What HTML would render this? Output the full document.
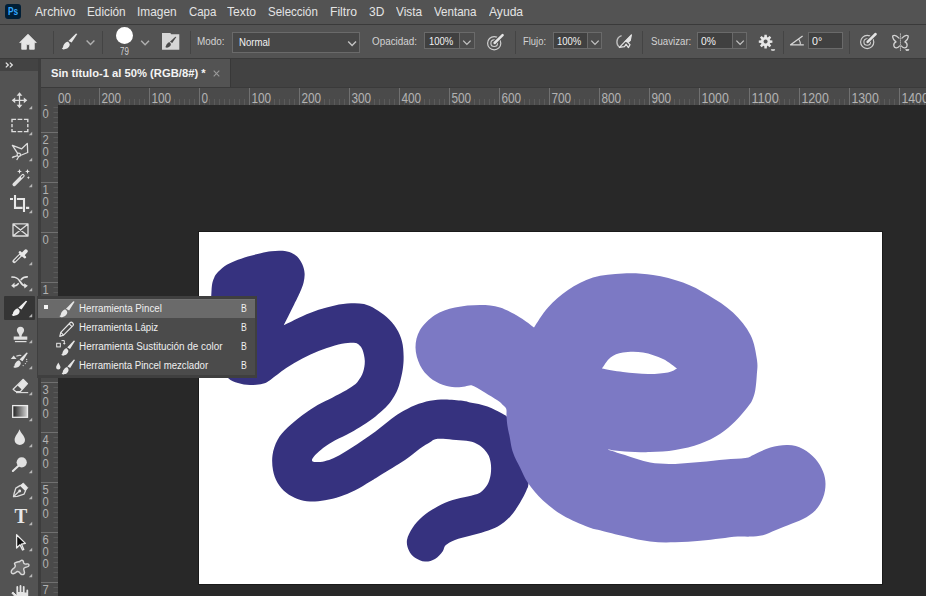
<!DOCTYPE html><html lang="es"><head><meta charset="utf-8"><title>Sin título-1 al 50% (RGB/8#) *</title><style>

html,body{margin:0;padding:0;background:#282828;}
body{width:926px;height:596px;overflow:hidden;position:relative;font-family:"Liberation Sans",sans-serif;}
.b{position:absolute;display:block;}
.t{position:absolute;display:block;white-space:pre;line-height:1;transform-origin:0 50%;}
svg text{font-family:"Liberation Sans",sans-serif;}
.art{display:block;}

</style></head><body>
<main class="document"><div class="b work" style="left:58px;top:105px;width:868px;height:491px;background:#282828;"></div><div class="b canvas" style="left:199px;top:232px;width:683px;height:352px;background:#fff;box-shadow:0 0 0 1px #1a1a1a;overflow:hidden"><svg class="art" width="683" height="352" viewBox="0 0 683 352"><path d="M12.6 56.9C12.7 56.0 12.8 53.5 13.2 51.7C13.6 49.9 14.3 47.6 15.1 45.9C15.8 44.2 16.0 43.3 17.7 41.4C19.4 39.4 22.5 36.3 25.5 34.2C28.5 32.1 32.0 30.6 35.9 29.0C39.8 27.4 44.5 25.8 48.8 24.5C53.1 23.2 57.9 22.2 61.8 21.3C65.7 20.4 69.0 19.7 72.2 19.3C75.4 18.9 78.2 18.6 81.2 18.7C84.2 18.8 87.5 19.0 90.3 20.0C93.1 21.0 95.9 22.4 98.1 24.5C100.3 26.6 102.1 29.5 103.3 32.3C104.6 35.1 105.4 38.4 105.6 41.4C105.8 44.4 105.3 47.3 104.6 50.4C103.9 53.5 102.1 57.5 101.2 59.8C100.3 62.1 100.8 60.9 99.3 64.0C97.8 67.1 94.5 73.7 92.1 78.6C89.7 83.5 86.0 90.8 84.8 93.2C87.9 91.7 97.6 86.8 103.4 84.2C109.2 81.6 114.2 79.6 119.6 77.8C125.0 76.0 130.4 74.5 135.8 73.4C141.2 72.3 147.1 71.5 152.0 71.3C156.9 71.1 160.9 71.2 165.0 72.1C169.1 73.1 172.5 74.8 176.3 77.0C180.1 79.2 184.1 81.9 187.6 85.1C191.1 88.3 194.8 92.3 197.4 96.4C200.0 100.4 201.8 104.8 203.0 109.4C204.2 114.0 204.5 119.3 204.6 123.9C204.7 128.5 204.5 132.3 203.8 136.9C203.1 141.5 201.7 147.7 200.6 151.5C199.6 155.3 198.8 157.2 197.5 160.0C196.2 162.8 194.6 165.4 192.8 168.0C191.0 170.6 189.3 172.8 186.6 175.5C183.9 178.2 180.3 181.4 176.5 184.4C172.7 187.3 168.1 190.5 163.9 193.2C159.7 195.9 155.9 198.2 151.3 200.7C146.7 203.2 140.4 206.0 136.2 208.3C132.0 210.6 129.1 212.5 126.2 214.6C123.3 216.7 120.6 219.0 118.6 220.8C116.6 222.6 115.1 224.2 114.2 225.5C113.3 226.8 112.8 227.7 113.0 228.4C113.2 229.1 113.7 229.7 115.5 229.9C117.3 230.1 120.8 230.2 123.6 229.7C126.4 229.2 129.3 228.4 132.5 227.1C135.7 225.8 139.2 224.0 142.5 222.1C145.8 220.2 149.0 218.1 152.6 215.8C156.2 213.5 159.9 211.0 163.9 208.3C167.9 205.6 172.3 202.7 176.5 199.5C180.7 196.3 184.9 192.5 189.1 189.4C193.3 186.2 197.2 183.3 201.7 180.6C206.2 177.9 211.1 175.3 216.0 173.3C220.9 171.3 226.0 169.8 231.0 168.8C236.0 167.8 240.6 167.5 246.0 167.5C251.4 167.5 259.4 168.3 263.6 168.8C267.8 169.3 268.3 169.9 271.0 170.4C273.7 170.9 276.8 171.2 279.7 171.9C282.6 172.6 285.6 173.4 288.5 174.5C291.4 175.6 294.1 177.0 297.2 178.5C300.3 180.0 305.4 182.8 307.0 183.7C309.7 186.4 319.0 193.4 323.0 200.0C327.0 206.6 329.9 214.6 331.0 223.0C332.1 231.4 330.2 244.8 329.6 250.6C329.0 256.4 329.0 254.7 327.6 258.0C326.2 261.4 323.7 266.3 321.0 270.7C318.3 275.1 315.0 280.5 311.3 284.5C307.6 288.5 303.0 292.0 298.8 294.5C294.6 297.0 290.6 297.9 286.0 299.5C281.4 301.1 276.0 302.4 271.0 303.8C266.0 305.2 260.1 306.4 256.0 308.0C251.9 309.6 248.7 311.4 246.6 313.3C244.5 315.2 245.4 317.2 243.6 319.5C241.8 321.8 238.9 325.3 236.0 327.0C233.1 328.7 229.3 329.8 226.0 329.6C222.7 329.4 218.7 327.7 216.0 325.8C213.3 323.9 211.1 321.3 209.8 318.3C208.5 315.3 207.4 311.8 208.0 308.0C208.6 304.2 211.0 299.6 213.6 295.7C216.2 291.8 219.4 288.1 223.6 284.5C227.8 280.9 233.6 277.1 238.6 274.4C243.6 271.6 248.7 269.7 253.7 268.0C258.7 266.3 264.1 265.6 268.7 264.4C273.2 263.2 277.8 262.6 281.0 260.7C284.2 258.8 286.5 255.6 288.2 253.0C289.9 250.4 290.5 247.7 291.2 245.1C291.9 242.5 292.0 239.8 292.1 237.3C292.2 234.8 292.0 232.6 291.6 230.3C291.2 228.0 290.6 225.5 289.5 223.3C288.4 221.1 286.9 219.0 285.1 217.2C283.4 215.4 281.5 213.7 279.0 212.4C276.5 211.1 273.9 210.0 270.3 209.3C266.7 208.6 261.6 208.4 257.2 208.0C252.8 207.6 247.6 206.8 244.1 206.7C240.6 206.6 238.4 206.6 236.2 207.2C234.0 207.8 233.5 208.6 231.0 210.2C228.5 211.8 225.2 213.5 221.0 216.5C216.8 219.5 212.6 223.6 206.0 228.0C199.4 232.4 187.1 239.6 181.3 243.2C175.5 246.8 175.4 247.0 171.2 249.5C167.0 252.0 161.2 255.8 156.2 258.3C151.2 260.8 146.2 262.8 141.2 264.5C136.2 266.2 131.0 267.5 126.0 268.3C121.0 269.1 115.6 269.7 111.0 269.5C106.4 269.3 102.6 268.4 98.6 267.0C94.7 265.6 90.7 263.5 87.3 260.8C84.0 258.1 80.7 254.5 78.5 250.7C76.3 246.9 74.8 242.8 74.0 238.2C73.2 233.6 72.8 228.2 73.5 223.2C74.2 218.2 76.0 212.6 78.5 208.0C81.0 203.4 84.4 199.8 88.6 195.6C92.8 191.4 98.6 186.8 103.6 183.0C108.6 179.2 113.6 175.9 118.6 173.0C123.6 170.1 129.5 167.7 133.7 165.5C137.9 163.3 141.1 161.6 143.9 160.1C146.7 158.6 148.0 158.0 150.4 156.3C152.8 154.6 156.2 152.6 158.5 149.9C160.8 147.2 162.9 143.6 164.1 140.1C165.3 136.6 165.9 132.5 165.8 128.8C165.7 125.1 164.5 120.6 163.6 118.0C162.7 115.4 161.8 114.6 160.6 113.4C159.4 112.2 158.5 111.4 156.5 111.0C154.5 110.6 152.2 110.6 148.8 111.0C145.4 111.4 140.7 112.0 135.8 113.4C130.9 114.7 125.0 116.9 119.6 119.1C114.2 121.3 108.8 123.6 103.4 126.4C98.0 129.2 92.6 132.5 87.2 136.1C81.8 139.7 74.9 145.6 71.0 148.2C67.1 150.8 66.9 151.0 63.6 151.8C60.3 152.6 55.1 153.1 51.0 153.0C46.9 152.9 42.7 152.2 39.0 151.0C35.3 149.8 32.3 149.0 29.0 146.0C25.7 143.0 21.5 139.3 19.0 133.0C16.5 126.7 15.2 117.2 14.0 108.0C12.8 98.8 12.2 86.5 12.0 78.0C11.8 69.5 12.5 60.4 12.6 56.9Z" fill="#36327f"/><path d="M335.0 95.5C337.3 92.2 343.3 81.8 349.0 75.5C354.7 69.2 361.5 63.0 369.0 58.0C376.5 53.0 384.8 48.2 394.0 45.5C403.2 42.8 414.0 41.9 424.0 41.5C434.0 41.1 444.0 41.5 454.0 43.0C464.0 44.5 474.8 47.2 484.0 50.5C493.2 53.8 500.7 58.0 509.0 63.0C517.3 68.0 526.9 73.8 534.0 80.5C541.1 87.2 547.5 95.1 551.5 103.0C555.5 110.9 557.0 121.3 558.0 128.0C559.0 134.7 558.1 138.0 557.8 143.0C557.5 148.0 557.0 153.8 556.3 158.0C555.5 162.2 554.6 165.1 553.3 168.0C552.0 170.9 551.1 171.9 548.3 175.5C545.5 179.1 540.8 184.9 536.3 189.3C531.8 193.7 527.1 198.1 521.3 201.8C515.4 205.6 508.7 209.1 501.2 211.8C493.7 214.5 484.6 216.7 476.2 218.1C467.8 219.5 459.4 219.9 451.0 220.1C442.6 220.3 433.1 219.8 426.0 219.4C418.9 218.9 411.4 217.7 408.5 217.4C411.4 218.3 418.9 220.9 426.0 223.1C433.1 225.3 442.7 229.1 451.1 230.6C459.5 232.1 467.9 232.0 476.2 231.9C484.6 231.8 492.9 230.8 501.2 230.1C509.6 229.4 518.8 228.3 526.3 227.6C533.8 226.9 541.3 227.1 546.3 226.1C551.3 225.2 552.1 223.6 556.3 221.9C560.5 220.1 566.0 217.1 571.4 215.6C576.8 214.1 583.5 212.9 588.9 213.1C594.3 213.3 599.4 214.6 604.0 216.9C608.6 219.2 613.2 223.1 616.5 226.9C619.8 230.6 622.3 235.2 624.0 239.4C625.7 243.6 626.5 247.5 626.5 251.9C626.5 256.3 625.7 261.3 624.0 265.7C622.3 270.1 619.8 274.6 616.5 278.2C613.2 281.8 608.6 284.5 604.0 287.0C599.4 289.5 593.5 291.4 588.9 293.3C584.3 295.2 580.6 296.6 576.4 298.3C572.2 300.0 568.1 302.2 563.9 303.3C559.7 304.3 555.5 304.4 551.3 304.6C547.1 304.8 543.8 304.3 538.8 304.6C533.8 304.9 527.6 305.9 521.3 306.6C515.0 307.3 508.7 308.2 501.2 308.8C493.7 309.4 484.6 310.2 476.2 310.3C467.9 310.4 459.5 310.6 451.1 309.6C442.8 308.7 434.5 306.5 426.1 304.6C417.8 302.7 407.2 299.9 401.0 298.3C394.8 296.7 395.2 297.5 389.0 295.0C382.8 292.5 371.5 287.9 364.0 283.5C356.5 279.1 349.8 273.9 344.0 268.5C338.2 263.1 332.8 256.5 329.0 251.0C325.2 245.5 323.5 240.7 321.0 235.6C318.5 230.5 315.8 226.1 314.0 220.6C312.2 215.2 311.2 207.3 310.3 202.9C309.4 198.5 309.0 197.4 308.5 194.2C308.0 191.0 307.7 186.6 307.5 183.7C307.3 180.8 307.9 178.6 307.2 176.7C306.5 174.8 304.8 173.8 303.3 172.4C301.8 170.9 300.9 169.9 298.0 168.0C295.1 166.1 290.2 163.1 286.2 160.7C282.1 158.3 277.0 154.7 273.7 153.7C270.4 152.7 269.0 154.2 266.1 154.5C263.2 154.8 259.9 155.5 256.1 155.2C252.4 154.9 247.8 154.3 243.6 152.7C239.4 151.1 234.8 148.9 231.0 145.7C227.2 142.4 223.4 138.2 221.0 133.2C218.6 128.2 216.5 121.5 216.5 115.6C216.5 109.7 217.8 103.4 221.0 98.0C224.2 92.6 230.2 86.8 236.0 83.0C241.8 79.2 248.5 77.2 256.0 75.5C263.5 73.8 273.5 73.0 281.0 73.0C288.5 73.0 294.3 73.4 301.0 75.5C307.7 77.6 315.3 82.2 321.0 85.5C326.7 88.8 332.7 93.8 335.0 95.5ZM403.0 136.5C404.4 134.7 408.0 128.2 411.5 125.5C415.0 122.8 418.6 121.3 424.0 120.5C429.4 119.7 437.3 119.4 444.0 120.5C450.7 121.6 458.3 124.3 464.0 127.0C469.7 129.7 475.7 134.9 478.0 136.5C476.5 137.2 473.8 139.6 469.0 140.5C464.2 141.4 456.5 142.1 449.0 142.0C441.5 141.9 431.7 140.9 424.0 140.0C416.3 139.1 406.5 137.1 403.0 136.5Z" fill="#7c79c4" fill-rule="evenodd"/></svg></div></main>
<div class="rulers"><svg class="b ruler" style="left:41px;top:88px;background:#4a4a4a" width="885" height="17" viewBox="0 0 885 17" font-size="14.5" fill="#b2b2b2"><path d="M58.5 0V17" stroke="#707070"/><path d="M108.5 0V17" stroke="#707070"/><path d="M158.5 0V17" stroke="#707070"/><path d="M208.5 0V17" stroke="#707070"/><path d="M258.5 0V17" stroke="#707070"/><path d="M308.5 0V17" stroke="#707070"/><path d="M358.5 0V17" stroke="#707070"/><path d="M408.5 0V17" stroke="#707070"/><path d="M458.5 0V17" stroke="#707070"/><path d="M508.5 0V17" stroke="#707070"/><path d="M558.5 0V17" stroke="#707070"/><path d="M608.5 0V17" stroke="#707070"/><path d="M658.5 0V17" stroke="#707070"/><path d="M708.5 0V17" stroke="#707070"/><path d="M758.5 0V17" stroke="#707070"/><path d="M808.5 0V17" stroke="#707070"/><path d="M858.5 0V17" stroke="#707070"/><path d="M18.5 11V17M23.5 11V17M28.5 11V17M33.5 11V17M38.5 11V17M43.5 11V17M48.5 11V17M53.5 11V17M63.5 11V17M68.5 11V17M73.5 11V17M78.5 11V17M83.5 11V17M88.5 11V17M93.5 11V17M98.5 11V17M103.5 11V17M113.5 11V17M118.5 11V17M123.5 11V17M128.5 11V17M133.5 11V17M138.5 11V17M143.5 11V17M148.5 11V17M153.5 11V17M163.5 11V17M168.5 11V17M173.5 11V17M178.5 11V17M183.5 11V17M188.5 11V17M193.5 11V17M198.5 11V17M203.5 11V17M213.5 11V17M218.5 11V17M223.5 11V17M228.5 11V17M233.5 11V17M238.5 11V17M243.5 11V17M248.5 11V17M253.5 11V17M263.5 11V17M268.5 11V17M273.5 11V17M278.5 11V17M283.5 11V17M288.5 11V17M293.5 11V17M298.5 11V17M303.5 11V17M313.5 11V17M318.5 11V17M323.5 11V17M328.5 11V17M333.5 11V17M338.5 11V17M343.5 11V17M348.5 11V17M353.5 11V17M363.5 11V17M368.5 11V17M373.5 11V17M378.5 11V17M383.5 11V17M388.5 11V17M393.5 11V17M398.5 11V17M403.5 11V17M413.5 11V17M418.5 11V17M423.5 11V17M428.5 11V17M433.5 11V17M438.5 11V17M443.5 11V17M448.5 11V17M453.5 11V17M463.5 11V17M468.5 11V17M473.5 11V17M478.5 11V17M483.5 11V17M488.5 11V17M493.5 11V17M498.5 11V17M503.5 11V17M513.5 11V17M518.5 11V17M523.5 11V17M528.5 11V17M533.5 11V17M538.5 11V17M543.5 11V17M548.5 11V17M553.5 11V17M563.5 11V17M568.5 11V17M573.5 11V17M578.5 11V17M583.5 11V17M588.5 11V17M593.5 11V17M598.5 11V17M603.5 11V17M613.5 11V17M618.5 11V17M623.5 11V17M628.5 11V17M633.5 11V17M638.5 11V17M643.5 11V17M648.5 11V17M653.5 11V17M663.5 11V17M668.5 11V17M673.5 11V17M678.5 11V17M683.5 11V17M688.5 11V17M693.5 11V17M698.5 11V17M703.5 11V17M713.5 11V17M718.5 11V17M723.5 11V17M728.5 11V17M733.5 11V17M738.5 11V17M743.5 11V17M748.5 11V17M753.5 11V17M763.5 11V17M768.5 11V17M773.5 11V17M778.5 11V17M783.5 11V17M788.5 11V17M793.5 11V17M798.5 11V17M803.5 11V17M813.5 11V17M818.5 11V17M823.5 11V17M828.5 11V17M833.5 11V17M838.5 11V17M843.5 11V17M848.5 11V17M853.5 11V17M863.5 11V17M868.5 11V17M873.5 11V17M878.5 11V17M883.5 11V17" stroke="#5a5a5a"/><text x="10.4" y="15" textLength="19.65" lengthAdjust="spacingAndGlyphs">300</text><text x="60.4" y="15" textLength="19.65" lengthAdjust="spacingAndGlyphs">200</text><text x="110.4" y="15" textLength="19.65" lengthAdjust="spacingAndGlyphs">100</text><text x="160.4" y="15" textLength="6.55" lengthAdjust="spacingAndGlyphs">0</text><text x="210.4" y="15" textLength="19.65" lengthAdjust="spacingAndGlyphs">100</text><text x="260.4" y="15" textLength="19.65" lengthAdjust="spacingAndGlyphs">200</text><text x="310.4" y="15" textLength="19.65" lengthAdjust="spacingAndGlyphs">300</text><text x="360.4" y="15" textLength="19.65" lengthAdjust="spacingAndGlyphs">400</text><text x="410.4" y="15" textLength="19.65" lengthAdjust="spacingAndGlyphs">500</text><text x="460.4" y="15" textLength="19.65" lengthAdjust="spacingAndGlyphs">600</text><text x="510.4" y="15" textLength="19.65" lengthAdjust="spacingAndGlyphs">700</text><text x="560.4" y="15" textLength="19.65" lengthAdjust="spacingAndGlyphs">800</text><text x="610.4" y="15" textLength="19.65" lengthAdjust="spacingAndGlyphs">900</text><text x="660.4" y="15" textLength="27.4" lengthAdjust="spacingAndGlyphs">1000</text><text x="710.4" y="15" textLength="27.4" lengthAdjust="spacingAndGlyphs">1100</text><text x="760.4" y="15" textLength="27.4" lengthAdjust="spacingAndGlyphs">1200</text><text x="810.4" y="15" textLength="27.4" lengthAdjust="spacingAndGlyphs">1300</text><text x="860.4" y="15" textLength="27.4" lengthAdjust="spacingAndGlyphs">1400</text></svg><svg class="b ruler" style="left:41px;top:88px;background:#4a4a4a" width="17" height="508" viewBox="0 0 17 508" font-size="12" fill="#b2b2b2"><path d="M0 44.5H17" stroke="#707070"/><path d="M0 94.5H17" stroke="#707070"/><path d="M0 144.5H17" stroke="#707070"/><path d="M0 194.5H17" stroke="#707070"/><path d="M0 244.5H17" stroke="#707070"/><path d="M0 294.5H17" stroke="#707070"/><path d="M0 344.5H17" stroke="#707070"/><path d="M0 394.5H17" stroke="#707070"/><path d="M0 444.5H17" stroke="#707070"/><path d="M0 494.5H17" stroke="#707070"/><path d="M12.5 19.5H17M12.5 24.5H17M12.5 29.5H17M12.5 34.5H17M12.5 39.5H17M12.5 49.5H17M12.5 54.5H17M12.5 59.5H17M12.5 64.5H17M12.5 69.5H17M12.5 74.5H17M12.5 79.5H17M12.5 84.5H17M12.5 89.5H17M12.5 99.5H17M12.5 104.5H17M12.5 109.5H17M12.5 114.5H17M12.5 119.5H17M12.5 124.5H17M12.5 129.5H17M12.5 134.5H17M12.5 139.5H17M12.5 149.5H17M12.5 154.5H17M12.5 159.5H17M12.5 164.5H17M12.5 169.5H17M12.5 174.5H17M12.5 179.5H17M12.5 184.5H17M12.5 189.5H17M12.5 199.5H17M12.5 204.5H17M12.5 209.5H17M12.5 214.5H17M12.5 219.5H17M12.5 224.5H17M12.5 229.5H17M12.5 234.5H17M12.5 239.5H17M12.5 249.5H17M12.5 254.5H17M12.5 259.5H17M12.5 264.5H17M12.5 269.5H17M12.5 274.5H17M12.5 279.5H17M12.5 284.5H17M12.5 289.5H17M12.5 299.5H17M12.5 304.5H17M12.5 309.5H17M12.5 314.5H17M12.5 319.5H17M12.5 324.5H17M12.5 329.5H17M12.5 334.5H17M12.5 339.5H17M12.5 349.5H17M12.5 354.5H17M12.5 359.5H17M12.5 364.5H17M12.5 369.5H17M12.5 374.5H17M12.5 379.5H17M12.5 384.5H17M12.5 389.5H17M12.5 399.5H17M12.5 404.5H17M12.5 409.5H17M12.5 414.5H17M12.5 419.5H17M12.5 424.5H17M12.5 429.5H17M12.5 434.5H17M12.5 439.5H17M12.5 449.5H17M12.5 454.5H17M12.5 459.5H17M12.5 464.5H17M12.5 469.5H17M12.5 474.5H17M12.5 479.5H17M12.5 484.5H17M12.5 489.5H17M12.5 499.5H17M12.5 504.5H17M12.5 509.5H17" stroke="#5a5a5a"/><text x="1.6" y="5.6" textLength="6.2" lengthAdjust="spacingAndGlyphs">3</text><text x="1.6" y="17.6" textLength="6.2" lengthAdjust="spacingAndGlyphs">0</text><text x="1.6" y="29.6" textLength="6.2" lengthAdjust="spacingAndGlyphs">0</text><text x="1.6" y="55.6" textLength="6.2" lengthAdjust="spacingAndGlyphs">2</text><text x="1.6" y="67.6" textLength="6.2" lengthAdjust="spacingAndGlyphs">0</text><text x="1.6" y="79.6" textLength="6.2" lengthAdjust="spacingAndGlyphs">0</text><text x="1.6" y="105.6" textLength="6.2" lengthAdjust="spacingAndGlyphs">1</text><text x="1.6" y="117.6" textLength="6.2" lengthAdjust="spacingAndGlyphs">0</text><text x="1.6" y="129.6" textLength="6.2" lengthAdjust="spacingAndGlyphs">0</text><text x="1.6" y="155.6" textLength="6.2" lengthAdjust="spacingAndGlyphs">0</text><text x="1.6" y="205.6" textLength="6.2" lengthAdjust="spacingAndGlyphs">1</text><text x="1.6" y="217.6" textLength="6.2" lengthAdjust="spacingAndGlyphs">0</text><text x="1.6" y="229.6" textLength="6.2" lengthAdjust="spacingAndGlyphs">0</text><text x="1.6" y="255.6" textLength="6.2" lengthAdjust="spacingAndGlyphs">2</text><text x="1.6" y="267.6" textLength="6.2" lengthAdjust="spacingAndGlyphs">0</text><text x="1.6" y="279.6" textLength="6.2" lengthAdjust="spacingAndGlyphs">0</text><text x="1.6" y="305.6" textLength="6.2" lengthAdjust="spacingAndGlyphs">3</text><text x="1.6" y="317.6" textLength="6.2" lengthAdjust="spacingAndGlyphs">0</text><text x="1.6" y="329.6" textLength="6.2" lengthAdjust="spacingAndGlyphs">0</text><text x="1.6" y="355.6" textLength="6.2" lengthAdjust="spacingAndGlyphs">4</text><text x="1.6" y="367.6" textLength="6.2" lengthAdjust="spacingAndGlyphs">0</text><text x="1.6" y="379.6" textLength="6.2" lengthAdjust="spacingAndGlyphs">0</text><text x="1.6" y="405.6" textLength="6.2" lengthAdjust="spacingAndGlyphs">5</text><text x="1.6" y="417.6" textLength="6.2" lengthAdjust="spacingAndGlyphs">0</text><text x="1.6" y="429.6" textLength="6.2" lengthAdjust="spacingAndGlyphs">0</text><text x="1.6" y="455.6" textLength="6.2" lengthAdjust="spacingAndGlyphs">6</text><text x="1.6" y="467.6" textLength="6.2" lengthAdjust="spacingAndGlyphs">0</text><text x="1.6" y="479.6" textLength="6.2" lengthAdjust="spacingAndGlyphs">0</text><text x="1.6" y="505.6" textLength="6.2" lengthAdjust="spacingAndGlyphs">7</text><text x="1.6" y="517.6" textLength="6.2" lengthAdjust="spacingAndGlyphs">0</text><text x="1.6" y="529.6" textLength="6.2" lengthAdjust="spacingAndGlyphs">0</text></svg><div class="b corner" style="left:41px;top:88px;width:17px;height:17px;background:#4a4a4a;"></div></div>
<nav class="tabs"><div class="b tabbar" style="left:41px;top:59px;width:885px;height:29px;background:#424242;"></div><div class="b" style="left:41px;top:87px;width:885px;height:1px;background:#3a3a3a;"></div><div class="b tab" style="left:41px;top:59px;width:189px;height:28px;background:#535353;border-right:1px solid #383838"></div><span class="t" style="left:51.00px;top:68.09px;font-size:11px;color:#f4f4f4;font-weight:700;transform:scaleX(1.0199);">Sin título-1 al 50% (RGB/8#) *</span><svg class="b" style="left:212.5px;top:69.5px" width="7" height="7" viewBox="0 0 7 7"><path d="M0.7 0.7L6.3 6.3M6.3 0.7L0.7 6.3" stroke="#9a9a9a" stroke-width="1.1" fill="none"/></svg></nav>
<aside class="tools"><div class="b toolbar" style="left:0px;top:59px;width:38px;height:537px;background:#535353;"></div><div class="b tb-head" style="left:0px;top:59px;width:38px;height:12px;background:#434343;"></div><svg class="b" style="left:5px;top:62px" width="9" height="6" viewBox="0 0 9 6"><path d="M0.8 0.6L3.3 3L0.8 5.4M4.800 0.6L7.300 3L4.800 5.4" fill="none" stroke="#e4e4e4" stroke-width="1.3"/></svg><div class="b" style="left:38px;top:59px;width:3px;height:537px;background:#3d3d3d;"></div><div class="b active" style="left:4.3px;top:296.3px;width:31px;height:23.4px;background:#353535;border-radius:1px"></div><svg class="b" style="left:0;top:0" width="40" height="596" viewBox="0 0 40 596"><path d="M32.2 105.8 V109.2 H28.8Z" fill="#b8b8b8" /><path d="M32.2 131.8 V135.2 H28.8Z" fill="#b8b8b8" /><path d="M32.2 157.8 V161.2 H28.8Z" fill="#b8b8b8" /><path d="M32.2 183.8 V187.2 H28.8Z" fill="#b8b8b8" /><path d="M32.2 209.8 V213.2 H28.8Z" fill="#b8b8b8" /><path d="M32.2 261.8 V265.2 H28.8Z" fill="#b8b8b8" /><path d="M32.2 287.8 V291.2 H28.8Z" fill="#b8b8b8" /><path d="M32.2 313.8 V317.2 H28.8Z" fill="#b8b8b8" /><path d="M32.2 339.8 V343.2 H28.8Z" fill="#b8b8b8" /><path d="M32.2 365.8 V369.2 H28.8Z" fill="#b8b8b8" /><path d="M32.2 391.8 V395.2 H28.8Z" fill="#b8b8b8" /><path d="M32.2 417.8 V421.2 H28.8Z" fill="#b8b8b8" /><path d="M32.2 443.8 V447.2 H28.8Z" fill="#b8b8b8" /><path d="M32.2 469.8 V473.2 H28.8Z" fill="#b8b8b8" /><path d="M32.2 495.8 V499.2 H28.8Z" fill="#b8b8b8" /><path d="M32.2 521.8 V525.2 H28.8Z" fill="#b8b8b8" /><path d="M32.2 547.8 V551.2 H28.8Z" fill="#b8b8b8" /><path d="M32.2 573.8 V577.2 H28.8Z" fill="#b8b8b8" /><path d="M19.5 94.5V106 M14 100.3H25" fill="none" stroke="#dedede" stroke-width="1.3" /><path d="M19.5 92.2L22.4 95.7H16.6Z M19.5 108.3L22.4 104.8H16.6Z M11.7 100.3L15.2 97.4V103.2Z M27.3 100.3L23.8 97.4V103.2Z" fill="#dedede" /><path d="M12 122.2V119.4H16.1 M17.6 119.4H22.3 M23.9 119.4H27.8V122.2 M27.8 124V127.3 M27.8 129V131.6H23.9 M22.3 131.6H17.6 M16.1 131.6H12V129 M12 127.3V124" fill="none" stroke="#dedede" stroke-width="1.4" /><path d="M17.6 153.3 L12.4 145.3 L21.7 148.8 L27.3 143.4 L27.7 152.5 L20.3 155.5" fill="none" stroke="#dedede" stroke-width="1.3" stroke-linejoin="round" stroke-linecap="round"/><circle cx="18.8" cy="154.8" r="1.7" fill="none" stroke="#dedede" stroke-width="1.2"/><path d="M17.6 155.6 L12.2 157.9 L12.6 156.8Z" fill="#dedede" stroke="#dedede" stroke-width="0.8" stroke-linejoin="round"/><path d="M18.8 156.5 L16.9 159.6" fill="none" stroke="#dedede" stroke-width="1.2" stroke-linecap="round"/><path d="M14.2 184.4 L22.9 175.7" fill="none" stroke="#e2e2e2" stroke-width="3.5" stroke-linecap="round"/><path d="M21.6 177 L22.9 175.7" fill="none" stroke="#555" stroke-width="1.3" stroke-linecap="round"/><path d="M19.50 168.90 L20.20 170.70 L22.00 171.40 L20.20 172.10 L19.50 173.90 L18.80 172.10 L17.00 171.40 L18.80 170.70Z" fill="#e8e8e8" /><path d="M27.50 168.90 L28.20 170.70 L30.00 171.40 L28.20 172.10 L27.50 173.90 L26.80 172.10 L25.00 171.40 L26.80 170.70Z" fill="#e8e8e8" /><path d="M28.40 176.10 L28.85 177.25 L30.00 177.70 L28.85 178.15 L28.40 179.30 L27.95 178.15 L26.80 177.70 L27.95 177.25Z" fill="#e0e0e0" /><path d="M15 195V207.9H22.6 M16.9 199H24V212 M10 199H13 M26 207.9H29.2" fill="none" stroke="#e8e8e8" stroke-width="2.1" /><path d="M13 223.9H28V236H13Z M13 223.9L28 236 M28 223.9L13 236" fill="none" stroke="#dedede" stroke-width="1.3" stroke-linejoin="round"/><path d="M14.3 261.3 L20.9 254.7" fill="none" stroke="#e4e4e4" stroke-width="3.7" stroke-linecap="round"/><path d="M14.9 260.7 L19.8 255.8" fill="none" stroke="#4a4a4a" stroke-width="1.3" stroke-linecap="round"/><path d="M20 252.4 L24.8 257.2" fill="none" stroke="#e8e8e8" stroke-width="2.6" stroke-linecap="round"/><path d="M22.6 254.6 L25.8 251.2" fill="none" stroke="#e8e8e8" stroke-width="3.8" stroke-linecap="round"/><path d="M12 277 C17.5 277 18.8 279.5 20.2 281.8 C21.6 284.1 22.8 285.6 25 285.9" fill="none" stroke="#e4e4e4" stroke-width="1.7" stroke-linecap="round"/><path d="M24 283.2 L27.9 285.8 L24.4 288.6Z" fill="#e4e4e4" /><path d="M27.2 276.8 C24 276.8 22.3 278 21.2 279.5" fill="none" stroke="#e4e4e4" stroke-width="1.7" stroke-linecap="round"/><path d="M18.2 283.7 C17.2 285 16.2 285.7 14.6 285.9" fill="none" stroke="#e4e4e4" stroke-width="1.6" stroke-linecap="round"/><path d="M14.6 282.6 L11.2 285.7 L14.4 288.3Z" fill="#e4e4e4" /><path d="M25.90 300.74L27.20 301.22L21.57 309.38L18.33 307.75Z" fill="#f0f0f0" /><path d="M18.13 308.71C18.6 309.0 19.4 310.1 19.6 310.8C19.8 311.5 19.6 312.3 19.2 312.9C18.9 313.6 18.1 314.4 17.4 314.8C16.8 315.3 15.9 315.4 15.2 315.6C14.6 315.8 13.9 316.0 13.3 315.9C12.8 315.8 11.9 315.4 11.8 315.0C11.7 314.7 12.6 314.5 12.8 314.0C13.1 313.5 13.0 312.7 13.3 312.1C13.7 311.4 14.3 310.6 14.8 310.0C15.4 309.5 16.0 309.0 16.5 308.8C17.1 308.6 17.6 308.4 18.1 308.7Z" fill="#f0f0f0" /><path d="M20.5 326.7 C23 326.7 24.2 328.5 24.1 330.4 C24 332.6 21.6 333.8 21.5 336.5 H27.3 V339.8 H13.7 V336.5 H19.5 C19.4 333.8 17 332.6 16.9 330.4 C16.8 328.5 18 326.7 20.5 326.7Z" fill="#e0e0e0" /><path d="M14.9 341 H26.5 V342.2 H14.9Z" fill="#e0e0e0" /><path d="M26.59 352.54L27.80 353.03L22.53 361.23L19.50 359.59Z" fill="#e4e4e4" /><path d="M19.32 360.56C19.8 360.9 20.5 362.0 20.7 362.7C20.9 363.4 20.7 364.1 20.3 364.8C20.0 365.5 19.3 366.3 18.7 366.7C18.0 367.2 17.3 367.3 16.6 367.5C16.0 367.7 15.4 367.9 14.8 367.8C14.3 367.7 13.5 367.3 13.4 366.9C13.3 366.6 14.1 366.4 14.4 365.9C14.6 365.4 14.5 364.6 14.8 363.9C15.2 363.3 15.7 362.5 16.2 361.9C16.7 361.4 17.3 360.9 17.8 360.7C18.3 360.4 18.8 360.2 19.3 360.6Z" fill="#e4e4e4" /><path d="M10.8 358.9 L16.5 358.9 L13.7 355.4Z" fill="#e0e0e0" /><path d="M16.3 356.2 Q18.8 355 21.3 355.5" fill="none" stroke="#cfcfcf" stroke-width="1.2" /><circle cx="26.6" cy="359.5" r="0.7" fill="#d0d0d0"/><circle cx="26.8" cy="361.6" r="0.7" fill="#d0d0d0"/><circle cx="25.4" cy="363.6" r="0.7" fill="#d0d0d0"/><circle cx="23.2" cy="365.6" r="0.7" fill="#d0d0d0"/><path d="M23.3 379.3 L27.5 383.7 L20.4 391.5 H15.7 L13.1 389.3Z" fill="none" stroke="#e0e0e0" stroke-width="1.2" stroke-linejoin="round"/><path d="M23.3 379.3 L27.5 383.7 L22 389.8 L17.5 385.4Z" fill="#e4e4e4" /><path d="M16 392.6 H28.2" fill="none" stroke="#e0e0e0" stroke-width="1.1" /><defs><linearGradient id="gr" x1="0" x2="1" y1="0" y2="0"><stop offset="0" stop-color="#1e1e1e"/><stop offset="1" stop-color="#d8d8d8"/></linearGradient></defs><rect x="12.7" y="405.6" width="14.8" height="11.7" fill="url(#gr)" stroke="#ececec" stroke-width="1.3"/><path d="M19.5 429.2 C20.5 432.8 25 436 25 440 A5.2 5 0 0 1 14.6 440 C14.6 436 18.5 432.8 19.5 429.2Z" fill="#e4e4e4" /><circle cx="21.7" cy="462.3" r="5.1" fill="#e0e0e0"/><path d="M18.3 466 L12.9 471" fill="none" stroke="#e4e4e4" stroke-width="2.1" stroke-linecap="round"/><path d="M13.5 496.7 L14.2 493.2 L15.8 488.1 L20.4 485.4 L25.6 490.6 L24.1 494.1 L17.3 496.3Z" fill="none" stroke="#dcdcdc" stroke-width="1.3" stroke-linejoin="round"/><path d="M20.4 485.4 L23.3 483 L27.8 487.7 L25.6 490.6Z" fill="#e6e6e6" stroke="#e6e6e6" stroke-width="0.8" stroke-linejoin="round"/><path d="M13.7 496.5 L19.2 491.3" fill="none" stroke="#dcdcdc" stroke-width="1.2" /><circle cx="19.7" cy="491" r="1.4" fill="#e6e6e6"/><text x="14.6" y="522.9" style="font-family:'Liberation Serif',serif;font-size:21px;font-weight:700" fill="#e8e8e8" textLength="12.8" lengthAdjust="spacingAndGlyphs">T</text><path d="M16.6 534.8 V548 L20 544.8 L22.5 550 L23.8 549.4 L21.5 544.2 L25.4 543.4Z" fill="#111" stroke="#ececec" stroke-width="1.3" stroke-linejoin="round"/><path d="M14.5 563.2C14.8 562.6 16.4 562.3 17.3 562.0C18.2 561.7 19.1 561.8 19.8 561.5C20.5 561.2 21.1 560.2 21.7 560.2C22.3 560.2 23.0 560.7 23.3 561.2C23.6 561.7 23.4 562.7 23.7 563.2C24.0 563.7 24.6 564.0 25.3 564.1C26.0 564.2 27.1 563.8 27.8 563.9C28.4 564.0 28.9 564.5 29.0 564.9C29.1 565.3 28.9 566.0 28.2 566.5C27.5 567.0 25.6 567.3 24.9 567.7C24.1 568.1 23.8 568.4 23.7 568.9C23.6 569.4 24.0 570.2 24.1 570.9C24.2 571.6 24.6 572.3 24.5 572.9C24.4 573.5 23.9 574.3 23.3 574.5C22.7 574.7 21.6 574.5 20.9 574.1C20.2 573.7 19.9 572.5 19.3 572.1C18.7 571.7 18.0 571.4 17.3 571.5C16.6 571.6 16.0 572.5 15.3 572.9C14.6 573.3 13.6 573.8 12.9 573.7C12.2 573.6 11.3 572.8 11.2 572.1C11.1 571.4 11.5 570.4 12.1 569.7C12.6 569.0 14.0 568.4 14.5 567.7C15.0 567.0 15.3 566.5 15.3 565.7C15.3 565.0 14.2 563.8 14.5 563.2Z" fill="#6c6c6c" stroke="#d8d8d8" stroke-width="1.4" stroke-linejoin="round"/><path d="M16.4 596 V587 A0.9 0.9 0 0 1 18.2 587 V592 H19.6 V586 A0.9 0.9 0 0 1 21.4 586 V592 H22.8 V586.8 A0.9 0.9 0 0 1 24.6 586.8 V592.5 H26.4 V590.5 A0.9 0.9 0 0 1 28.2 590.5 V596Z" fill="#e4e4e4" /><path d="M11.8 593 L15 596.5 L17 596 L13.2 592.2Z" fill="#e4e4e4" stroke="#e4e4e4" stroke-width="1" stroke-linejoin="round"/></svg></aside>
<header class="b menubar" style="left:0;top:0;width:926px;height:24px;background:#535353"><div class="b logo" style="left:5px;top:4px;width:16px;height:15px;background:#001e36;border-radius:3px"></div><span class="t" style="left:8.40px;top:6.73px;font-size:10px;color:#31a8ff;font-weight:700;transform:scaleX(0.8339);">Ps</span><span class="t mi" style="left:34.60px;top:5.20px;font-size:13px;color:#e4e4e4;transform:scaleX(0.9366);">Archivo</span><span class="t mi" style="left:86.70px;top:5.20px;font-size:13px;color:#e4e4e4;transform:scaleX(0.9053);">Edición</span><span class="t mi" style="left:137.10px;top:5.20px;font-size:13px;color:#e4e4e4;transform:scaleX(0.9132);">Imagen</span><span class="t mi" style="left:188.70px;top:5.20px;font-size:13px;color:#e4e4e4;transform:scaleX(0.8784);">Capa</span><span class="t mi" style="left:227.30px;top:5.20px;font-size:13px;color:#e4e4e4;transform:scaleX(0.9333);">Texto</span><span class="t mi" style="left:267.80px;top:5.20px;font-size:13px;color:#e4e4e4;transform:scaleX(0.8852);">Selección</span><span class="t mi" style="left:330.00px;top:5.20px;font-size:13px;color:#e4e4e4;transform:scaleX(0.9346);">Filtro</span><span class="t mi" style="left:368.80px;top:5.20px;font-size:13px;color:#e4e4e4;transform:scaleX(0.9207);">3D</span><span class="t mi" style="left:395.60px;top:5.20px;font-size:13px;color:#e4e4e4;transform:scaleX(0.9105);">Vista</span><span class="t mi" style="left:434.00px;top:5.20px;font-size:13px;color:#e4e4e4;transform:scaleX(0.8907);">Ventana</span><span class="t mi" style="left:488.50px;top:5.20px;font-size:13px;color:#e4e4e4;transform:scaleX(0.9310);">Ayuda</span></header>
<section class="options"><div class="b optbar" style="left:0px;top:24px;width:926px;height:35px;background:#535353;border-top:1px solid #3a3a3a;border-bottom:1px solid #3a3a3a;box-sizing:border-box"></div><div class="b sep" style="left:53px;top:31px;width:1px;height:23px;background:#444444;"></div><div class="b sep" style="left:102.3px;top:31px;width:1px;height:23px;background:#444444;"></div><div class="b sep" style="left:190.3px;top:31px;width:1px;height:23px;background:#444444;"></div><div class="b sep" style="left:514.6px;top:31px;width:1px;height:23px;background:#444444;"></div><div class="b sep" style="left:642px;top:31px;width:1px;height:23px;background:#444444;"></div><div class="b sep" style="left:783px;top:31px;width:1px;height:23px;background:#444444;"></div><div class="b sep" style="left:848.6px;top:31px;width:1px;height:23px;background:#444444;"></div><div class="b preset" style="left:116.2px;top:27.3px;width:17px;height:17px;background:#fff;border-radius:50%"></div><span class="t" style="left:119.80px;top:47.14px;font-size:10px;color:#d2d2d2;transform:scaleX(0.7911);">79</span><span class="t" style="left:197.00px;top:36.94px;font-size:10px;color:#d2d2d2;transform:scaleX(0.9930);">Modo:</span><div class="b select" style="left:231.6px;top:32.4px;width:128px;height:20.2px;background:#474747;border:1px solid #6a6a6a;box-sizing:border-box"></div><span class="t" style="left:239.00px;top:38.14px;font-size:10px;color:#f2f2f2;transform:scaleX(0.9619);">Normal</span><span class="t" style="left:372.00px;top:36.94px;font-size:10px;color:#d2d2d2;transform:scaleX(0.9871);">Opacidad:</span><div class="b field" style="left:424px;top:32px;width:36px;height:17px;background:#404040;border:1px solid #6a6a6a;box-sizing:border-box"></div><span class="t" style="left:428.60px;top:36.94px;font-size:10px;color:#f2f2f2;transform:scaleX(0.9501);">100%</span><div class="b dd" style="left:460px;top:32px;width:14.5px;height:17px;background:#4c4c4c;border:1px solid #6a6a6a;border-left:0;box-sizing:border-box"></div><span class="t" style="left:523.40px;top:36.94px;font-size:10px;color:#d2d2d2;transform:scaleX(0.9405);">Flujo:</span><div class="b field" style="left:553px;top:32px;width:34.5px;height:17px;background:#404040;border:1px solid #6a6a6a;box-sizing:border-box"></div><span class="t" style="left:557.40px;top:36.94px;font-size:10px;color:#f2f2f2;transform:scaleX(0.9501);">100%</span><div class="b dd" style="left:587.5px;top:32px;width:14.8px;height:17px;background:#4c4c4c;border:1px solid #6a6a6a;border-left:0;box-sizing:border-box"></div><span class="t" style="left:650.70px;top:36.94px;font-size:10px;color:#d2d2d2;transform:scaleX(0.9668);">Suavizar:</span><div class="b field" style="left:697.2px;top:32px;width:35.6px;height:17px;background:#404040;border:1px solid #6a6a6a;box-sizing:border-box"></div><span class="t" style="left:700.60px;top:36.94px;font-size:10px;color:#f2f2f2;transform:scaleX(1.0240);">0%</span><div class="b dd" style="left:732.8px;top:32px;width:14.6px;height:17px;background:#4c4c4c;border:1px solid #6a6a6a;border-left:0;box-sizing:border-box"></div><div class="b field" style="left:807.8px;top:32px;width:34.8px;height:17px;background:#404040;border:1px solid #6a6a6a;box-sizing:border-box"></div><span class="t" style="left:812.30px;top:36.94px;font-size:10px;color:#f2f2f2;transform:scaleX(1.0668);">0°</span><svg class="b" style="left:0;top:0" width="926" height="60" viewBox="0 0 926 60"><path d="M28 34.2 L36.3 42.6 L34.3 42.6 L34.3 49.3 L29.6 49.3 L29.6 44.6 L26.4 44.6 L26.4 49.3 L21.7 49.3 L21.7 42.6 L19.7 42.6Z" fill="#e6e6e6" stroke="#e6e6e6" stroke-width="0.8" stroke-linejoin="round"/><path d="M76.00 33.60L77.30 34.10L71.65 42.60L68.40 40.90Z" fill="#e8e8e8" /><path d="M68.20 41.90C68.7 42.2 69.5 43.4 69.7 44.1C69.9 44.8 69.7 45.6 69.3 46.3C68.9 47.0 68.2 47.8 67.5 48.3C66.8 48.8 66.0 48.9 65.3 49.1C64.6 49.3 64.0 49.5 63.4 49.4C62.8 49.3 61.9 48.8 61.9 48.5C61.8 48.2 62.6 47.9 62.9 47.4C63.2 46.9 63.1 46.1 63.4 45.4C63.7 44.7 64.4 43.9 64.9 43.3C65.4 42.7 66.0 42.2 66.6 42.0C67.1 41.8 67.7 41.5 68.2 41.9Z" fill="#e8e8e8" /><path d="M86.60 40.40 L90.50 44.40 L94.40 40.40" fill="none" stroke="#b0b0b0" stroke-width="1.4" /><path d="M141.20 40.80 L145.10 44.80 L149.00 40.80" fill="none" stroke="#b0b0b0" stroke-width="1.4" /><path d="M162 33 H170.3 L171.2 34.3 H179.3 V49.8 H162Z" fill="#d6d6d6" /><path d="M175.37 36.70L176.30 37.05L172.24 42.91L169.91 41.74Z" fill="#4a4a4a" /><path d="M169.76 42.43C170.1 42.7 170.7 43.4 170.8 43.9C171.0 44.5 170.8 45.0 170.6 45.5C170.3 45.9 169.7 46.5 169.3 46.8C168.8 47.2 168.2 47.3 167.7 47.4C167.2 47.5 166.7 47.7 166.3 47.6C165.9 47.5 165.3 47.2 165.2 47.0C165.1 46.7 165.8 46.6 166.0 46.2C166.1 45.9 166.1 45.3 166.3 44.8C166.6 44.4 167.0 43.8 167.4 43.4C167.8 43.0 168.2 42.7 168.6 42.5C169.0 42.3 169.4 42.2 169.8 42.4Z" fill="#4a4a4a" /><path d="M348.20 41.40 L352.10 45.40 L356.00 41.40" fill="none" stroke="#c4c4c4" stroke-width="1.4" /><path d="M463.20 40.60 L466.90 44.40 L470.60 40.60" fill="none" stroke="#c4c4c4" stroke-width="1.3" /><path d="M591.30 40.60 L595.00 44.40 L598.70 40.60" fill="none" stroke="#c4c4c4" stroke-width="1.3" /><path d="M736.40 40.60 L740.10 44.40 L743.80 40.60" fill="none" stroke="#c4c4c4" stroke-width="1.3" /><circle cx="494.20" cy="43.20" r="6.6" fill="none" stroke="#cfcfcf" stroke-width="1.2"/><circle cx="494.20" cy="43.20" r="3.3" fill="none" stroke="#cfcfcf" stroke-width="1.1"/><path d="M494.80 42.60 L502.80 34.60" fill="none" stroke="#535353" stroke-width="4.6" stroke-linecap="butt"/><path d="M494.60 43.00 L502.60 35.20" fill="none" stroke="#e4e4e4" stroke-width="2.5" stroke-linecap="round"/><path d="M620.2 47.6 A6.6 6.6 0 0 1 621.6 35.6" fill="none" stroke="#bdbdbd" stroke-width="1.5" /><path d="M631.4 34.8 L619.4 47.4 L624.5 46.6 L626 44.2 L628.4 47.6 L630 44.6 L627.8 42.4 L630.2 40.6Z" fill="#535353" stroke="#e4e4e4" stroke-width="1.2" stroke-linejoin="round"/><path d="M631.4 34.8 L624.2 41.8 L627.8 42.4 L630.2 40.6Z" fill="#e4e4e4" /><path d="M770.09 40.21L772.40 40.43L772.40 42.77L770.09 42.99L769.76 43.79L771.23 45.58L769.58 47.23L767.79 45.76L766.99 46.09L766.77 48.40L764.43 48.40L764.21 46.09L763.41 45.76L761.62 47.23L759.97 45.58L761.44 43.79L761.11 42.99L758.80 42.77L758.80 40.43L761.11 40.21L761.44 39.41L759.97 37.62L761.62 35.97L763.41 37.44L764.21 37.11L764.43 34.80L766.77 34.80L766.99 37.11L767.79 37.44L769.58 35.97L771.23 37.62L769.76 39.41ZM765.60 39.60 a2 2 0 1 0 0.01 0Z" fill="#e6e6e6" fill-rule="evenodd"/><path d="M770.8 49.2 H775.2 L774.4 50.8 H771.6Z" fill="#e6e6e6" /><path d="M802.6 36 L790.6 44.8 H803.8" fill="none" stroke="#d8d8d8" stroke-width="1.3" stroke-linejoin="round"/><path d="M798.6 39 Q800.4 41.5 800.4 44.6" fill="none" stroke="#d8d8d8" stroke-width="1.1" /><circle cx="867.20" cy="42.00" r="6.6" fill="none" stroke="#cfcfcf" stroke-width="1.2"/><circle cx="867.20" cy="42.00" r="3.3" fill="none" stroke="#cfcfcf" stroke-width="1.1"/><path d="M867.80 41.40 L875.80 33.40" fill="none" stroke="#535353" stroke-width="4.6" stroke-linecap="butt"/><path d="M867.60 41.80 L875.60 34.00" fill="none" stroke="#e4e4e4" stroke-width="2.5" stroke-linecap="round"/><path d="M899.00 38.10 C897.50 36.50 896.00 35.30 894.50 35.30 C893.00 35.30 892.50 36.00 892.70 37.20 C893.00 39.50 894.50 41.00 896.00 41.90 C894.50 42.60 893.60 44.00 893.80 45.50 C894.00 47.00 895.20 47.90 896.60 47.80 C897.80 47.70 898.80 47.00 899.50 46.00" fill="none" stroke="#d2d2d2" stroke-width="1.3" stroke-linejoin="round" stroke-linecap="round"/><path d="M901.90 38.10 C903.40 36.50 904.90 35.30 906.40 35.30 C907.90 35.30 908.40 36.00 908.20 37.20 C907.90 39.50 906.40 41.00 904.90 41.90 C906.40 42.60 907.30 44.00 907.10 45.50 C906.90 47.00 905.70 47.90 904.30 47.80 C903.10 47.70 902.10 47.00 901.40 46.00" fill="none" stroke="#d2d2d2" stroke-width="1.3" stroke-linejoin="round" stroke-linecap="round"/><path d="M900.45 33.6 V51" fill="none" stroke="#ededed" stroke-width="1" stroke-dasharray="1 1"/><path d="M905.2 49.2 H909.4 L908.6 50.7 H906Z" fill="#ececec" /></svg></section>
<div class="menu" role="menu"><div class="b flyout" style="left:37px;top:296.2px;width:220.2px;height:81.4px;background:#3f3f3f;"><div class="b" style="left:1.2px;top:2.8px;width:216.5px;height:76.2px;background:#4b4b4b;"></div></div><div class="b sel" style="left:38.2px;top:299px;width:216.5px;height:19px;background:#6a6a6a;border-top:1px solid #727272;box-sizing:border-box"></div><div class="b" style="left:44px;top:305px;width:4.2px;height:4.2px;background:#f4f4f4;"></div><span class="t" style="left:79.40px;top:304.14px;font-size:10px;color:#f0f0f0;transform:scaleX(0.9749);">Herramienta Pincel</span><span class="t" style="left:241.20px;top:304.14px;font-size:10px;color:#f0f0f0;transform:scaleX(0.8695);">B</span><span class="t" style="left:79.40px;top:323.14px;font-size:10px;color:#f0f0f0;transform:scaleX(0.9693);">Herramienta Lápiz</span><span class="t" style="left:241.20px;top:323.14px;font-size:10px;color:#f0f0f0;transform:scaleX(0.8695);">B</span><span class="t" style="left:79.40px;top:342.14px;font-size:10px;color:#f0f0f0;transform:scaleX(0.9892);">Herramienta Sustitución de color</span><span class="t" style="left:241.20px;top:342.14px;font-size:10px;color:#f0f0f0;transform:scaleX(0.8695);">B</span><span class="t" style="left:79.40px;top:361.14px;font-size:10px;color:#f0f0f0;transform:scaleX(0.9638);">Herramienta Pincel mezclador</span><span class="t" style="left:241.20px;top:361.14px;font-size:10px;color:#f0f0f0;transform:scaleX(0.8695);">B</span><svg class="b" style="left:40px;top:296px" width="60" height="84" viewBox="40 296 60 84"><path d="M73.34 301.35L74.60 301.85L69.11 310.38L65.96 308.67Z" fill="#e6e6e6" /><path d="M65.77 309.68C66.3 310.0 67.0 311.1 67.2 311.9C67.4 312.6 67.2 313.4 66.8 314.1C66.5 314.8 65.7 315.6 65.1 316.1C64.4 316.6 63.6 316.7 62.9 316.9C62.3 317.1 61.7 317.3 61.1 317.2C60.5 317.1 59.7 316.6 59.6 316.3C59.5 316.0 60.4 315.7 60.6 315.2C60.9 314.7 60.8 313.9 61.1 313.2C61.4 312.5 62.0 311.6 62.6 311.1C63.1 310.5 63.7 310.0 64.2 309.8C64.7 309.5 65.3 309.3 65.8 309.7Z" fill="#e6e6e6" /><path d="M59.8 336.3 L60.8 332.3 L70.4 322.5 C71.5 321.4 74.3 324 73.2 325.3 L63.6 335.2Z" fill="none" stroke="#e6e6e6" stroke-width="1.2" stroke-linejoin="round"/><path d="M69.2 323.8 L72 326.6 M60.8 332.3 L63.6 335.2" fill="none" stroke="#e6e6e6" stroke-width="1.1" /><path d="M73.86 340.54L75.00 341.02L70.03 349.12L67.17 347.50Z" fill="#e6e6e6" /><path d="M66.99 348.45C67.4 348.8 68.1 349.9 68.3 350.5C68.5 351.2 68.3 352.0 68.0 352.6C67.6 353.3 67.0 354.1 66.4 354.6C65.8 355.0 65.0 355.1 64.4 355.3C63.8 355.5 63.3 355.7 62.8 355.6C62.3 355.5 61.5 355.1 61.4 354.7C61.3 354.4 62.1 354.2 62.3 353.7C62.6 353.2 62.5 352.4 62.8 351.8C63.1 351.1 63.6 350.3 64.1 349.8C64.6 349.2 65.1 348.8 65.6 348.5C66.1 348.3 66.5 348.1 67.0 348.5Z" fill="#e6e6e6" /><rect x="56.7" y="343.3" width="3.6" height="3.6" fill="none" stroke="#e6e6e6" stroke-width="1"/><path d="M61.5 340.6 H64.3 V343.3" fill="none" stroke="#e6e6e6" stroke-width="1" /><path d="M64.3 344.7 L62.9 342.9 H65.7Z" fill="#e6e6e6" /><path d="M73.89 359.54L75.00 360.01L70.17 368.01L67.40 366.41Z" fill="#e6e6e6" /><path d="M67.23 367.35C67.7 367.7 68.4 368.7 68.5 369.4C68.7 370.1 68.5 370.8 68.2 371.5C67.9 372.1 67.2 372.9 66.6 373.4C66.1 373.8 65.3 373.9 64.7 374.1C64.2 374.3 63.6 374.5 63.1 374.4C62.6 374.3 61.9 373.9 61.8 373.6C61.7 373.2 62.5 373.0 62.7 372.5C62.9 372.0 62.8 371.3 63.1 370.6C63.4 370.0 64.0 369.2 64.4 368.7C64.9 368.1 65.4 367.7 65.9 367.4C66.3 367.2 66.8 367.0 67.2 367.3Z" fill="#e6e6e6" /><path d="M58.3 362.4 C59 364.3 60.5 365.6 60.5 367.2 A2.2 2.2 0 0 1 56.1 367.2 C56.1 365.6 57.6 364.3 58.3 362.4Z" fill="#e6e6e6" /></svg></div>
</body></html>
